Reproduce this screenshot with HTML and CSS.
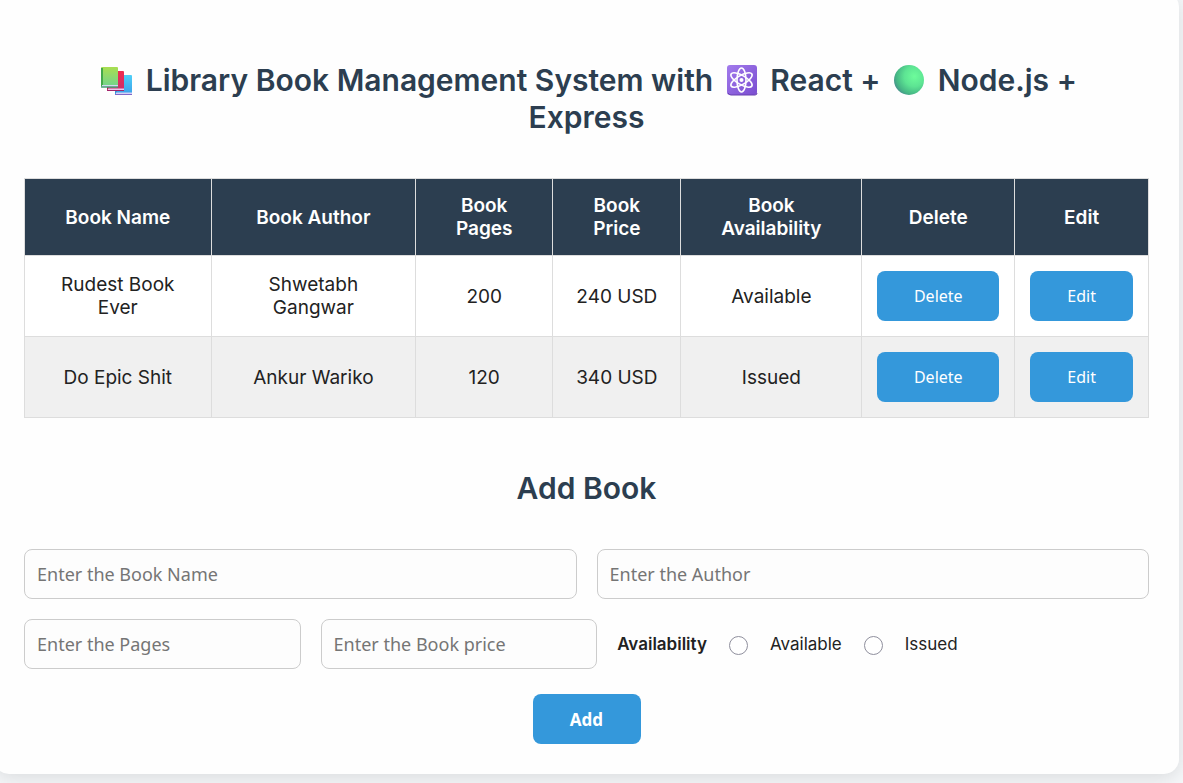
FILE: index.html
```html
<!DOCTYPE html>
<html lang="en">
<head>
<meta charset="utf-8">
<meta name="viewport" content="width=device-width, initial-scale=1">
<title>Library Book Management System</title>
<link rel="stylesheet" href="styles.css">
</head>
<body>
<main class="card">
  <h1 class="heading">
    <svg class="emoji" viewBox="0 0 42 32" aria-hidden="true">
      <defs>
        <linearGradient id="green" x1="0" y1="0" x2="0" y2="1"><stop offset="0" stop-color="#a9de50"/><stop offset="1" stop-color="#6fd390"/></linearGradient>
        <linearGradient id="red" x1="0" y1="0" x2="0" y2="1"><stop offset="0" stop-color="#f02c50"/><stop offset="1" stop-color="#c92f6a"/></linearGradient>
        <linearGradient id="blue" x1="0" y1="0" x2="0" y2="1"><stop offset="0" stop-color="#4fd0f8"/><stop offset="1" stop-color="#3a9fe8"/></linearGradient>
      </defs>
      <rect x="19" y="11" width="17" height="20" rx="1" fill="url(#blue)"/>
      <path d="M20 12v17" stroke="#3590d4" stroke-width="2"/>
      <rect x="20" y="28.500" width="16" height="1.500" fill="#d5d0f8"/>
      <rect x="19" y="30" width="17" height="1" fill="#8068c8"/>
      <rect x="11" y="7" width="17" height="20" rx="1" fill="url(#red)"/>
      <path d="M12 8v17" stroke="#b51f4c" stroke-width="2"/>
      <rect x="12" y="24.500" width="16" height="1.500" fill="#ecc8ee"/>
      <rect x="11" y="26" width="17" height="1" fill="#a3246a"/>
      <rect x="5" y="3" width="17" height="20.500" rx="1" fill="url(#green)"/>
      <path d="M6 4v18" stroke="#43a84a" stroke-width="2"/>
      <rect x="6" y="21" width="16" height="1.500" fill="#d3d8f0"/>
      <rect x="5" y="22.500" width="17" height="1" fill="#37806c"/>
    </svg>
    Library Book Management System with
    <svg class="emoji" viewBox="0 0 42 32" aria-hidden="true">
      <defs><linearGradient id="violet" x1="0" y1="0" x2="1" y2="1"><stop offset="0" stop-color="#a27bec"/><stop offset="1" stop-color="#7a4dd0"/></linearGradient></defs>
      <rect x="6" y="1" width="30" height="30" rx="3" fill="url(#violet)"/>
      <path d="M7 29q1 2 3 2h24q2 0 2-2" fill="none" stroke="#6840ae"/>
      <g fill="none" stroke="#fff" stroke-width="1.6">
        <ellipse cx="20.500" cy="16" rx="4.500" ry="12"/>
        <ellipse cx="20.500" cy="16" rx="4.500" ry="12" transform="rotate(60 20.500 16)"/>
        <ellipse cx="20.500" cy="16" rx="4.500" ry="12" transform="rotate(-60 20.500 16)"/>
      </g>
      <circle cx="20.500" cy="16" r="2" fill="#fff"/>
    </svg>
    React +
    <svg class="emoji" viewBox="0 0 42 32" aria-hidden="true">
      <defs><radialGradient id="ball" cx=".68" cy=".38" r=".75"><stop offset="0" stop-color="#6dfc9b"/><stop offset=".45" stop-color="#5de493"/><stop offset=".8" stop-color="#46b785"/><stop offset="1" stop-color="#48878e"/></radialGradient></defs>
      <circle cx="21" cy="16" r="15" fill="url(#ball)"/>
    </svg>
    Node.js + Express
  </h1>

  <table class="books">
    <colgroup>
      <col class="col-name"><col class="col-author"><col class="col-pages"><col class="col-price"><col class="col-status"><col class="col-delete"><col class="col-edit">
    </colgroup>
    <thead>
      <tr><th scope="col">Book Name</th><th scope="col">Book Author</th><th scope="col">Book Pages</th><th scope="col">Book Price</th><th scope="col">Book Availability</th><th scope="col">Delete</th><th scope="col">Edit</th></tr>
    </thead>
    <tbody>
      <tr><td>Rudest Book Ever</td><td>Shwetabh Gangwar</td><td>200</td><td>240 USD</td><td>Available</td><td><button class="button" type="button">Delete</button></td><td><button class="button" type="button">Edit</button></td></tr>
      <tr><td>Do Epic Shit</td><td>Ankur Wariko</td><td>120</td><td>340 USD</td><td>Issued</td><td><button class="button" type="button">Delete</button></td><td><button class="button" type="button">Edit</button></td></tr>
    </tbody>
  </table>

  <h2 class="heading">Add Book</h2>
  <form class="form">
    <div class="row row-halves">
      <input class="field" type="text" placeholder="Enter the Book Name" aria-label="Book name">
      <input class="field" type="text" placeholder="Enter the Author" aria-label="Author">
    </div>
    <div class="row row-details">
      <input class="field" type="text" placeholder="Enter the Pages" aria-label="Pages">
      <input class="field" type="text" placeholder="Enter the Book price" aria-label="Book price">
      <div class="choices" role="radiogroup" aria-labelledby="availability">
        <strong class="choices-title" id="availability">Availability</strong>
        <label class="choice"><input class="radio" type="radio" name="availability" value="available">Available</label>
        <label class="choice"><input class="radio" type="radio" name="availability" value="issued">Issued</label>
      </div>
    </div>
    <button class="button button-add" type="submit">Add</button>
  </form>
</main>
</body>
</html>
```
FILE: styles.css
```css
* { box-sizing: border-box; }

body {
  display: flow-root;
  min-height: 100vh;
  margin: 0;
  overflow: hidden;
  background: #f6f8fa;
  color: #222;
  font-family: Inter, "Liberation Sans", sans-serif;
  font-size: 19px;
  line-height: 23px;
}

.card {
  margin: -8px 4px 0 -6px;
  padding: 70px 30px 30px;
  border-radius: 15px;
  background: #fefefe;
  box-shadow: 0 4px 20px rgba(0, 0, 0, 0.12);
}

.heading {
  margin: 0;
  padding: 0 30px;
  color: #2c3e50;
  font-size: 30px;
  font-weight: 600;
  line-height: 37px;
  text-align: center;
}

.emoji {
  width: 42px;
  height: 32px;
  vertical-align: -5px;
}

.books {
  width: 100%;
  margin: 42px 0 52px;
  border-collapse: collapse;
  table-layout: fixed;
  text-align: center;
}

.col-name { width: 16.6%; }
.col-author { width: 18.2%; }
.col-pages { width: 12.2%; }
.col-price { width: 11.4%; }
.col-status { width: 16.1%; }
.col-delete { width: 13.6%; }
.col-edit { width: 11.9%; }

.books th,
.books td {
  padding: 15px;
  border: 1px solid #ddd;
}

.books th {
  background: #2c3e50;
  color: #fff;
  font-weight: 600;
}

.books tbody tr { background: #fff; }
.books tbody tr:nth-child(even) { background: #f0f0f0; }

.button {
  display: block;
  width: 100%;
  height: 50px;
  padding: 0;
  border: 0;
  border-radius: 8px;
  background: #3498db;
  color: #fff;
  font-family: "Noto Sans", sans-serif;
  font-size: 16px;
}

.button-add {
  width: 108px;
  margin: 5px auto 0;
  font-size: 17px;
  font-weight: 700;
}

.form {
  display: grid;
  gap: 20px;
  margin-top: 42px;
}

.row {
  display: grid;
  gap: 20px;
}

.row-halves { grid-template-columns: 1fr 1fr; }
.row-details { grid-template-columns: 26fr 26fr 50fr; }

.field {
  width: 100%;
  min-width: 0;
  height: 50px;
  padding: 0 12px;
  border: 1px solid #ccc;
  border-radius: 8px;
  background: #fdfdfd;
  color: #222;
  font-family: "Noto Sans", sans-serif;
  font-size: 18px;
}

.field::placeholder { color: #757575; }

.choices {
  display: flex;
  align-items: center;
  gap: 22px;
  font-size: 17px;
}

.choices-title { font-weight: 600; }

.choice {
  display: flex;
  align-items: center;
  gap: 22px;
}

.radio {
  width: 19px;
  height: 19px;
  margin: 2px 0 0;
  appearance: none;
  border: 1px solid #8f8f9d;
  border-radius: 50%;
  background: #fff;
}

.radio:checked { border: 6px solid #3498db; }
```
